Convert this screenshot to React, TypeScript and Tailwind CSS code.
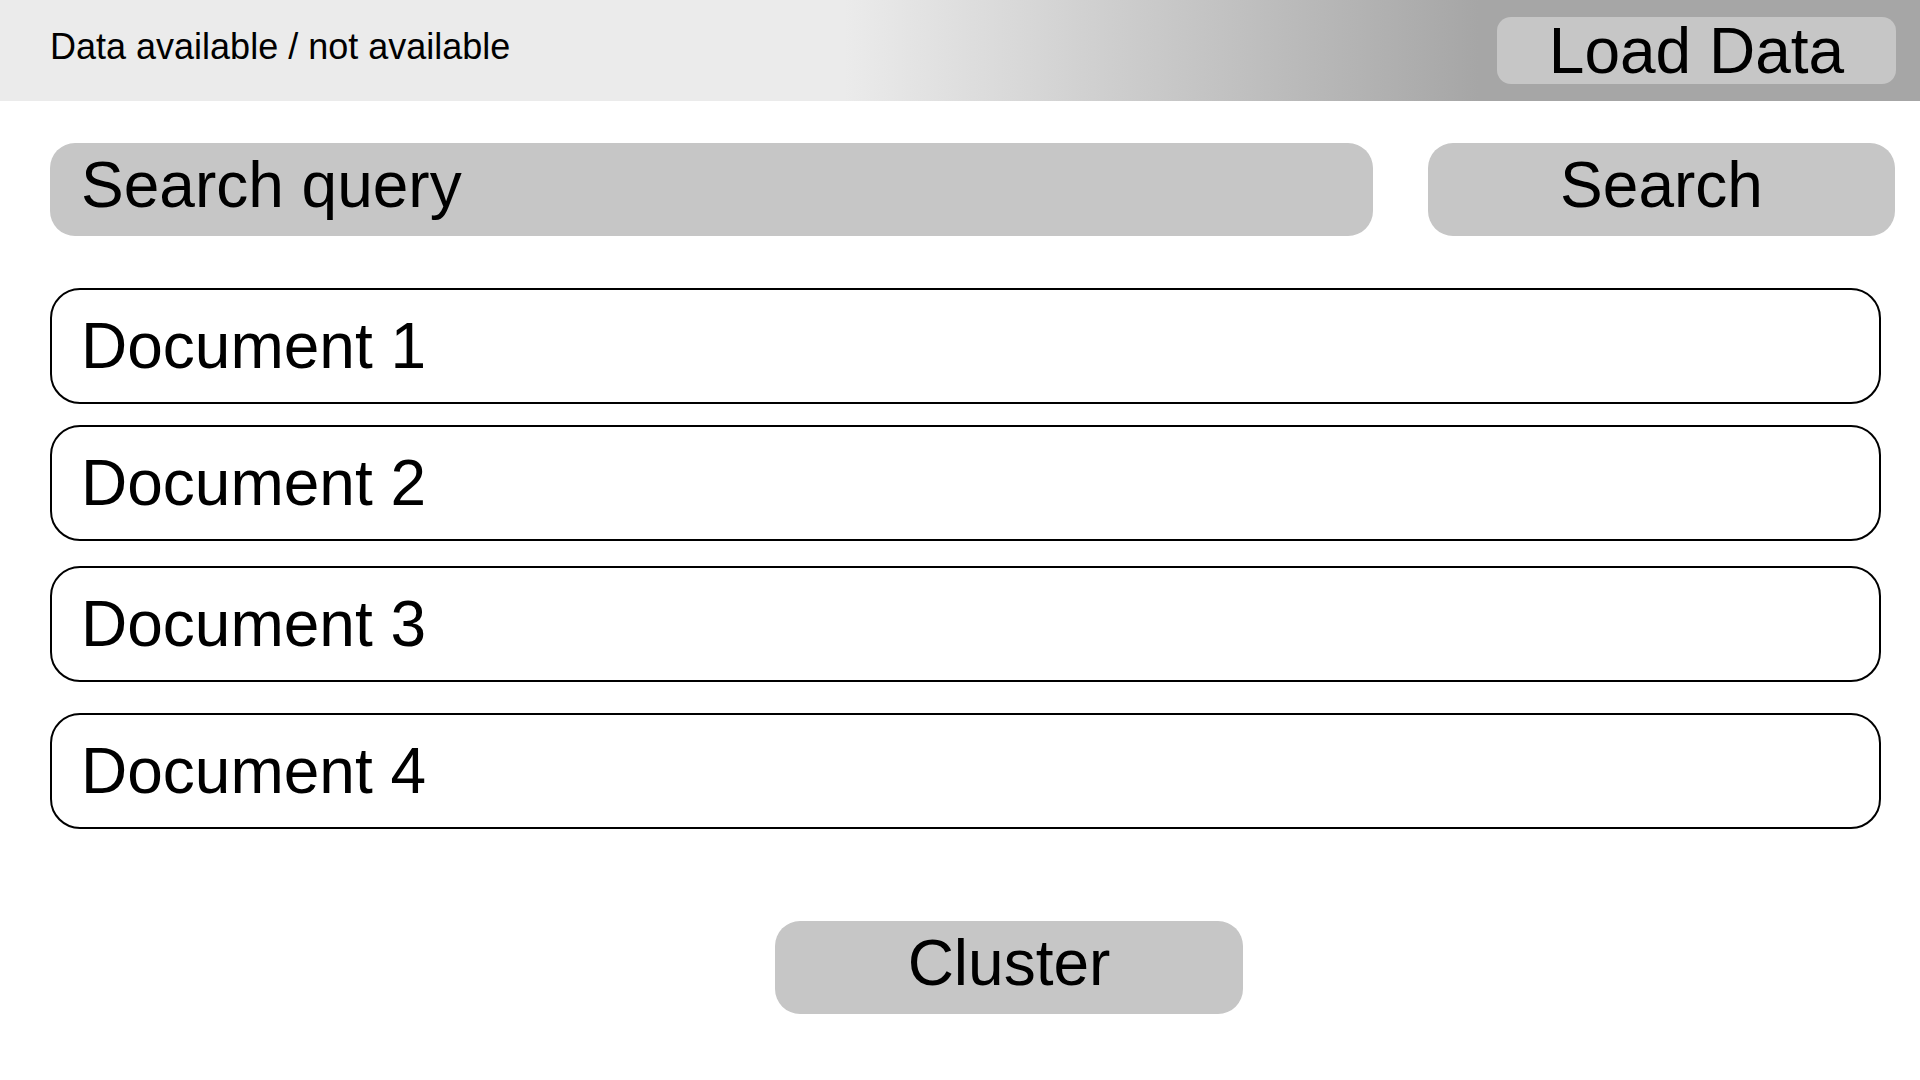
import React from 'react';

const docs = [
  { name: 'Document 1', gap: 'mt-0' },
  { name: 'Document 2', gap: 'mt-[21px]' },
  { name: 'Document 3', gap: 'mt-[25px]' },
  { name: 'Document 4', gap: 'mt-[31px]' },
];

export default function App() {
  return (
    <div className="w-[1920px] h-[1080px] bg-white text-black font-['Liberation_Sans',Arial,sans-serif] overflow-hidden">
      {/* top bar */}
      <div className="h-[101px] flex items-center justify-between pl-[50px] pr-[24px] bg-[linear-gradient(to_right,#ebebeb_44%,#a6a6a6_77%)]">
        <span className="text-[36px] leading-none mb-[8px]">Data available / not available</span>
        <button className="w-[399px] h-[67px] rounded-[14px] bg-[#c6c6c6] text-[64px] leading-none flex items-center justify-center">
          Load Data
        </button>
      </div>

      {/* search */}
      <div className="flex items-center gap-[55px] pl-[50px] pr-[25px] mt-[42px]">
        <div className="flex-1 h-[93px] rounded-[25px] bg-[#c6c6c6] flex items-center pl-[31px] pb-[10px] text-[64px] leading-none">
          Search query
        </div>
        <button className="w-[467px] h-[93px] rounded-[25px] bg-[#c6c6c6] flex items-center justify-center pb-[10px] text-[64px] leading-none">
          Search
        </button>
      </div>

      {/* results */}
      <div className="flex flex-col pl-[50px] pr-[39px] mt-[52px]">
        {docs.map(d => (
          <div
            key={d.name}
            className={`${d.gap} h-[116px] rounded-[30px] border-2 border-black flex items-center pl-[29px] text-[64px] leading-none`}
          >
            {d.name}
          </div>
        ))}
      </div>

      <div className="pl-[775px] mt-[92px]">
        <button className="w-[468px] h-[93px] rounded-[25px] bg-[#c6c6c6] flex items-center justify-center pb-[10px] text-[64px] leading-none">
          Cluster
        </button>
      </div>
    </div>
  );
}
